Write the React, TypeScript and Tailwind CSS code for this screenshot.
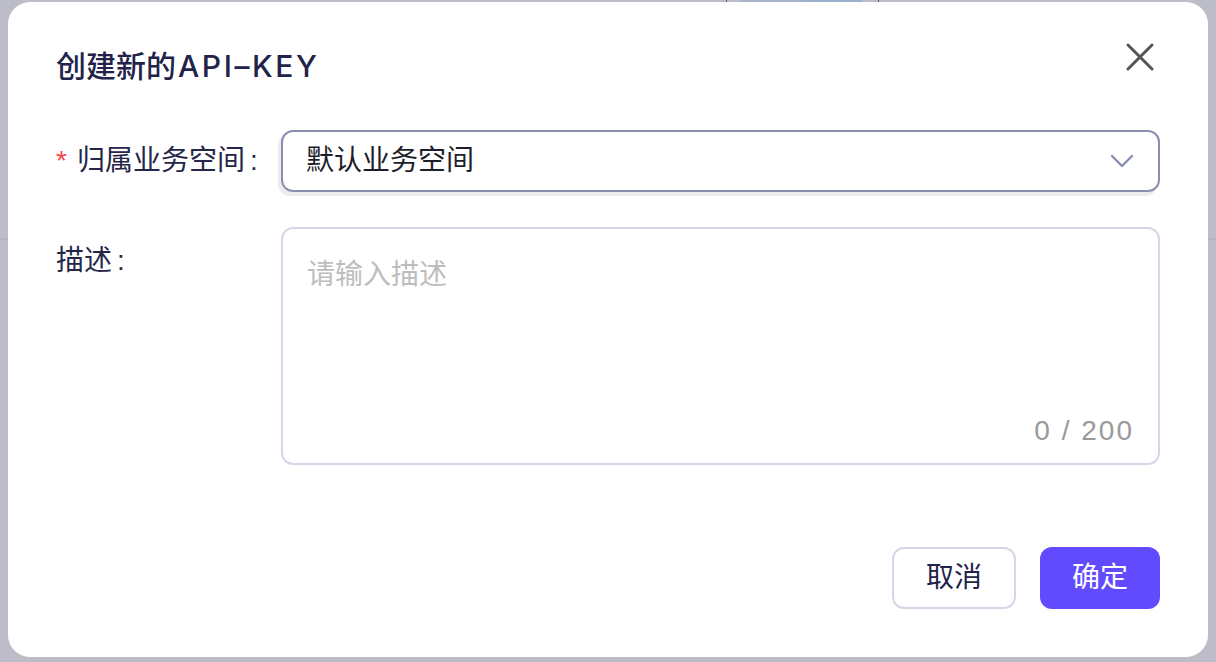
import React from "react";

const font = { fontFamily: '"Liberation Sans", "Noto Sans CJK SC", sans-serif' };
const titleFont = { fontFamily: 'Inter, "Noto Sans CJK SC", sans-serif' };

export default function App() {
  return (
    <div className="relative h-[662px] w-[1216px] overflow-hidden bg-[#bdbdca]" style={font}>
      {/* underlying page, dimmed */}
      <div className="absolute inset-0 flex flex-col">
        <div className="flex h-[2px]">
          <div className="w-[726px]" />
          <div className="w-[1px] bg-[#5c5c66]" />
          <div className="w-[14px]" />
          <div className="w-[61px] bg-[#a9b3c9]" />
          <div className="w-[60px] bg-[#9eb0cf]" />
          <div className="w-[16px]" />
          <div className="w-[1px] bg-[#5c5c66]" />
        </div>
        <div className="h-[236px]" />
        <div className="h-[2px] bg-[#b2b2c0]" />
      </div>

      <div className="absolute inset-0 flex items-start justify-center pt-[2px]">
        <div className="relative flex h-[655px] w-[1200px] flex-col rounded-[22px] bg-white px-[48px]">
          <h2 className="mt-[44px] text-[30px] font-medium leading-[40px] text-[#23234a]" style={titleFont}>
            创建新的<span className="ml-[2px] tracking-[2.6px]">API–KEY</span>
          </h2>
          <button className="absolute right-[50px] top-[37px] flex h-[36px] w-[36px] items-center justify-center">
            <svg width="28" height="28" viewBox="0 0 28 28" fill="none" stroke="#555558" strokeWidth="3" strokeLinecap="round">
              <path d="M2 2L26 26M26 2L2 26" />
            </svg>
          </button>

          <div className="mt-[44px] flex items-center">
            <div className="flex w-[225px] items-center text-[28px] text-[#26264a]">
              <span className="mr-[10px] text-[#f5474f]">*</span>
              <span>归属业务空间</span>
              <span className="ml-[5px]">:</span>
            </div>
            <div className="flex h-[62px] flex-1 items-center justify-between rounded-[12px] border-2 border-[#8a8eb0] pl-[23px] pr-[24px] shadow-[-3px_4px_0_0_#ececee]">
              <span className="text-[28px] text-[#1e1e2a]">默认业务空间</span>
              <svg width="24" height="14" viewBox="0 0 24 14" fill="none" stroke="#8a8eb0" strokeWidth="2.4" strokeLinecap="round" strokeLinejoin="round">
                <path d="M2 2L12 12L22 2" />
              </svg>
            </div>
          </div>

          <div className="mt-[35px] flex items-start">
            <div className="w-[225px] pt-[14px] text-[28px] leading-[40px] text-[#26264a]">
              描述<span className="ml-[5px]">:</span>
            </div>
            <div className="flex h-[238px] flex-1 flex-col justify-between rounded-[12px] border-2 border-[#d6d7e6] px-[24px] pb-[12px] pt-[26px]">
              <span className="text-[28px] leading-[40px] text-[#bdbdbd]">请输入描述</span>
              <span className="self-end text-[28px] leading-[40px] tracking-[2px] text-[#999999]">0 / 200</span>
            </div>
          </div>

          <div className="mt-[82px] flex justify-end gap-[24px]">
            <button className="flex h-[62px] w-[124px] items-center justify-center rounded-[12px] border-2 border-[#d6d7e6] bg-white text-[28px] text-[#23234a]">
              取消
            </button>
            <button className="flex h-[62px] w-[120px] items-center justify-center rounded-[12px] bg-[#624bff] text-[28px] text-white">
              确定
            </button>
          </div>
        </div>
      </div>
    </div>
  );
}
